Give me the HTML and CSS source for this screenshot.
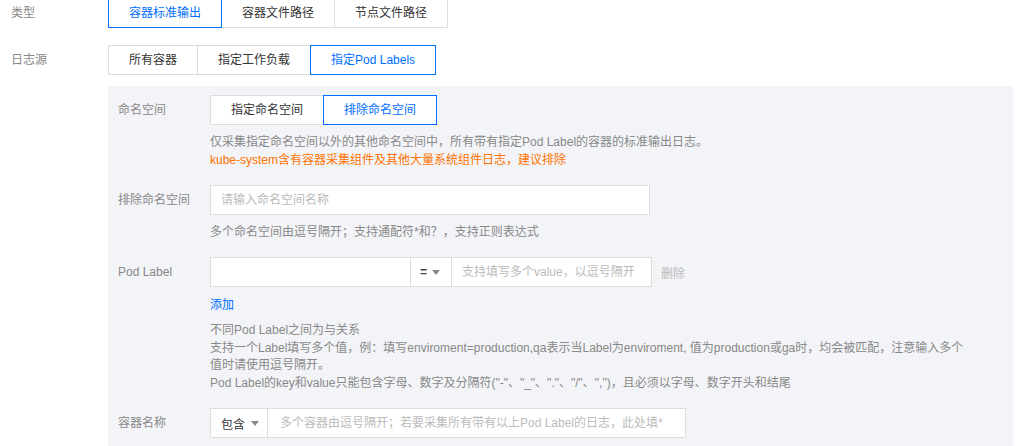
FILE: index.html
```html
<!DOCTYPE html>
<html lang="zh-CN">
<head>
<meta charset="utf-8">
<title>日志采集规则</title>
<link rel="stylesheet" href="styles.css">
</head>
<body>
<div class="page">
  <div class="row top-row">
    <div class="label">类型</div>
    <div class="seg">
      <span class="seg-btn is-active">容器标准输出</span>
      <span class="seg-btn">容器文件路径</span>
      <span class="seg-btn">节点文件路径</span>
    </div>
  </div>
  <div class="row source-row">
    <div class="label">日志源</div>
    <div class="seg">
      <span class="seg-btn">所有容器</span>
      <span class="seg-btn">指定工作负载</span>
      <span class="seg-btn is-active">指定Pod Labels</span>
    </div>
  </div>

  <div class="panel">
    <div class="item">
      <div class="item-label">命名空间</div>
      <div class="item-control">
        <div class="seg">
          <span class="seg-btn">指定命名空间</span>
          <span class="seg-btn is-active">排除命名空间</span>
        </div>
        <div class="help">仅采集指定命名空间以外的其他命名空间中，所有带有指定Pod Label的容器的标准输出日志。<br><span class="warn">kube-system含有容器采集组件及其他大量系统组件日志，建议排除</span></div>
      </div>
    </div>

    <div class="item">
      <div class="item-label">排除命名空间</div>
      <div class="item-control">
        <div class="input wide"><span class="placeholder">请输入命名空间名称</span></div>
        <div class="help">多个命名空间由逗号隔开；支持通配符*和？，支持正则表达式</div>
      </div>
    </div>

    <div class="item">
      <div class="item-label">Pod Label</div>
      <div class="item-control">
        <div class="label-row">
          <div class="input key"></div>
          <div class="select op"><span class="op-text">=</span><span class="caret"></span></div>
          <div class="input val"><span class="placeholder">支持填写多个value，以逗号隔开</span></div>
          <span class="del">删除</span>
        </div>
        <div class="add"><span class="link">添加</span></div>
        <div class="help long">不同Pod Label之间为与关系<br>支持一个Label填写多个值，例：填写enviroment=production,qa表示当Label为enviroment, 值为production或ga时，均会被匹配，注意输入多个<br>值时请使用逗号隔开。<br>Pod Label的key和value只能包含字母、数字及分隔符("-"、"_"、"."、"/"、",")，且必须以字母、数字开头和结尾</div>
      </div>
    </div>

    <div class="item">
      <div class="item-label">容器名称</div>
      <div class="item-control">
        <div class="combo">
          <div class="select mode"><span class="mode-text">包含</span><span class="caret"></span></div>
          <div class="combo-input"><span class="placeholder">多个容器由逗号隔开；若要采集所有带有以上Pod Label的日志，此处填*</span></div>
        </div>
      </div>
    </div>
  </div>
</div>
</body>
</html>
```

FILE: styles.css
```css
* { box-sizing: border-box; }

html, body {
  margin: 0;
  padding: 0;
  background: #ffffff;
}

body {
  font-family: "Liberation Sans", "Noto Sans CJK SC", sans-serif;
  font-size: 12px;
  color: #333333;
  overflow: hidden;
}

.page {
  margin-top: -2px;
  padding-left: 11px;
  padding-right: 6px;
}

.row {
  display: flex;
  align-items: flex-start;
}

.source-row {
  margin-top: 17px;
}

.label {
  width: 97px;
  line-height: 30px;
  color: #888888;
}

.seg {
  display: flex;
}

.seg-btn {
  position: relative;
  display: block;
  height: 30px;
  line-height: 28px;
  padding: 0 20px;
  border: 1px solid #dddddd;
  background: #ffffff;
  color: #333333;
  white-space: nowrap;
}

.seg-btn + .seg-btn {
  margin-left: -1px;
}

.seg-btn.is-active {
  z-index: 1;
  border-color: #006eff;
  color: #006eff;
}

.panel {
  margin-top: 11px;
  margin-left: 97px;
  background: #f3f4f7;
  padding: 9px 0 20px 10px;
  min-height: 400px;
}

.item {
  display: flex;
  align-items: flex-start;
}

.item + .item {
  margin-top: 16px;
}

.item-label {
  width: 92px;
  line-height: 30px;
  color: #888888;
  flex: none;
}

.item-control {
  flex: 1;
  min-width: 0;
}

.help {
  margin-top: 8px;
  line-height: 18px;
  color: #888888;
  white-space: nowrap;
}

.help.long {
  line-height: 17.5px;
}

.warn {
  color: #ff7200;
}

.input {
  height: 30px;
  border: 1px solid #dddddd;
  background: #ffffff;
  line-height: 28px;
  padding: 0 10px;
  overflow: hidden;
  white-space: nowrap;
}

.input.wide {
  width: 440px;
}

.placeholder {
  color: #bbbbbb;
}

.label-row {
  display: flex;
  align-items: center;
}

.input.key {
  width: 201px;
}

.select {
  height: 30px;
  border: 1px solid #dddddd;
  background: #ffffff;
  display: flex;
  align-items: center;
}

.select.op {
  width: 42px;
  margin-left: -1px;
  padding-left: 9px;
}

.op-text {
  color: #444444;
  font-weight: bold;
  margin-right: 5px;
}

.caret {
  width: 0;
  height: 0;
  border-left: 4px solid transparent;
  border-right: 4px solid transparent;
  border-top: 5px solid #888888;
}

.input.val {
  width: 201px;
  margin-left: -1px;
}

.del {
  margin-left: 9px;
  color: #bbbbbb;
}

.add {
  margin-top: 9px;
  line-height: 18px;
}

.link {
  color: #006eff;
}

.combo {
  display: flex;
  width: 476px;
  height: 30px;
  border: 1px solid #dddddd;
  background: #ffffff;
}

.select.mode {
  border: none;
  border-right: 1px solid #dddddd;
  height: 28px;
  width: 57px;
  padding-left: 10px;
}

.mode-text {
  color: #333333;
  margin-right: 6px;
}

.combo-input {
  flex: 1;
  line-height: 28px;
  padding-left: 12px;
  white-space: nowrap;
  overflow: hidden;
}
```
